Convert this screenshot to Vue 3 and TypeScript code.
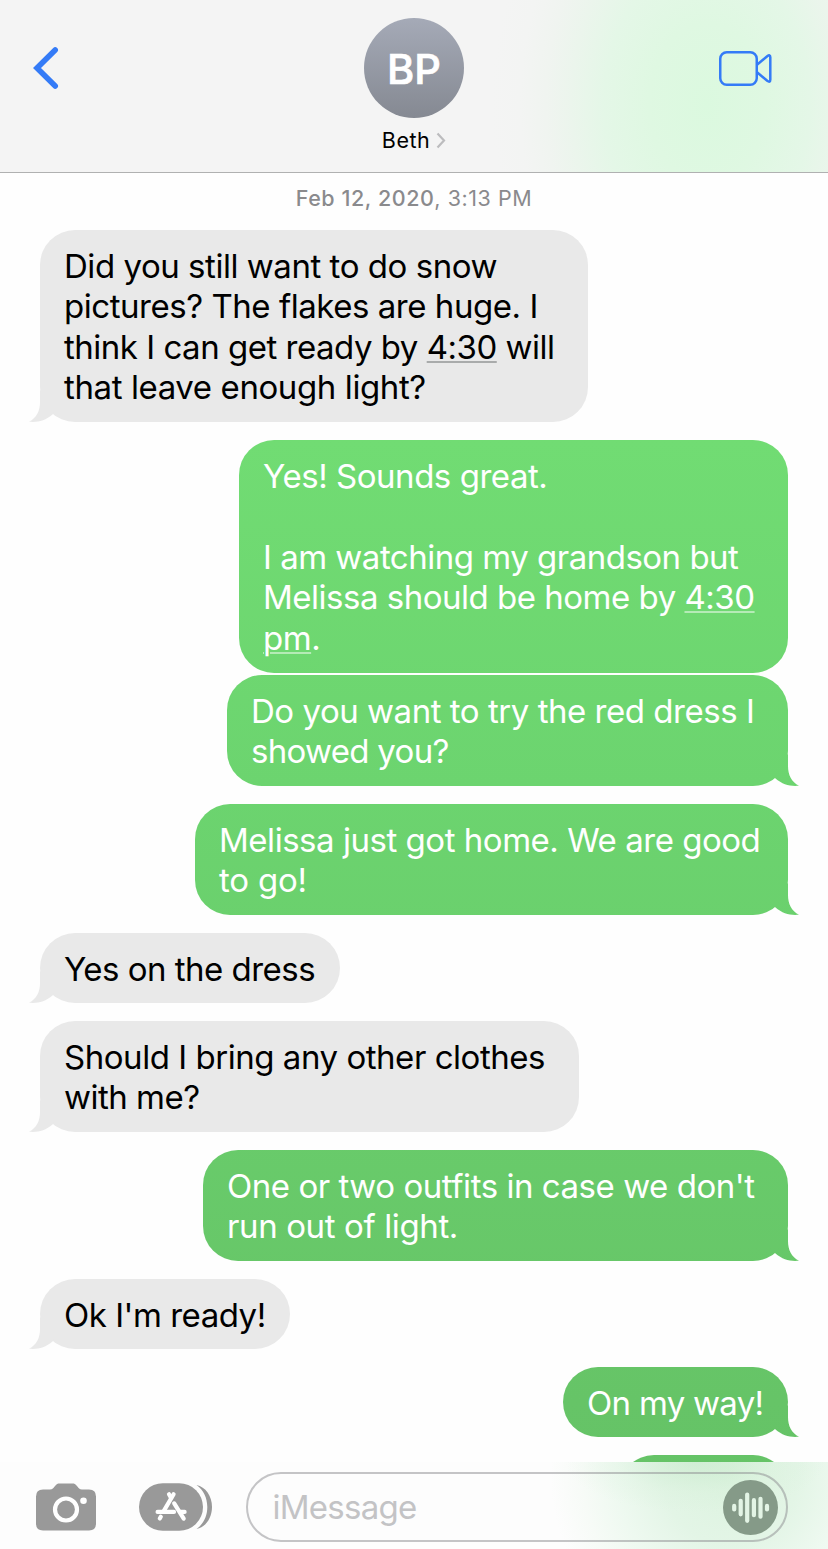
<script setup lang="ts">
interface Segment {
  text: string
  link?: boolean
}

interface Line {
  segments: Segment[]
  tracking: number
}

interface Message {
  side: 'in' | 'out'
  width: number
  tail: boolean
  lines: Line[]
}

const line = (text: string, tracking = -0.46): Line => ({ segments: [{ text }], tracking })

const messages: Message[] = [
  {
    side: 'in',
    width: 548,
    tail: true,
    lines: [
      line('Did you still want to do snow'),
      line('pictures? The flakes are huge. I'),
      { segments: [{ text: 'think I can get ready by ' }, { text: '4:30', link: true }, { text: ' will' }], tracking: -0.49 },
      line('that leave enough light?', -0.4),
    ],
  },
  {
    side: 'out',
    width: 549,
    tail: false,
    lines: [
      line('Yes! Sounds great.'),
      line(''),
      line('I am watching my grandson but', -0.5),
      { segments: [{ text: 'Melissa should be home by ' }, { text: '4:30', link: true }], tracking: -0.49 },
      { segments: [{ text: 'pm', link: true }, { text: '.' }], tracking: -0.5 },
    ],
  },
  {
    side: 'out',
    width: 561,
    tail: true,
    lines: [line('Do you want to try the red dress I', -0.47), line('showed you?', -0.7)],
  },
  {
    side: 'out',
    width: 593,
    tail: true,
    lines: [line('Melissa just got home. We are good', -0.47), line('to go!', -0.2)],
  },
  { side: 'in', width: 300, tail: true, lines: [line('Yes on the dress', -0.52)] },
  { side: 'in', width: 539, tail: true, lines: [line('Should I bring any other clothes', -0.46), line('with me?', -0.5)] },
  { side: 'out', width: 585, tail: true, lines: [line("One or two outfits in case we don't"), line('run out of light.', -0.38)] },
  { side: 'in', width: 250, tail: true, lines: [line("Ok I'm ready!", -0.48)] },
  { side: 'out', width: 225, tail: true, lines: [line('On my way!', -0.7)] },
  { side: 'out', width: 169, tail: false, lines: [line('')] },
]
</script>

<template>
  <div class="phone">
    <header class="header">
      <svg class="back" width="28" height="44" viewBox="0 0 28 44">
        <path d="M23.2 4 5 22.1 23.2 40" />
      </svg>
      <div class="contact">
        <div class="avatar"><span>BP</span></div>
        <div class="name">
          <span>Beth</span>
          <svg width="10" height="17" viewBox="0 0 10 17"><path d="M1.5 1.5 8 8.5 1.5 15.5" /></svg>
        </div>
      </div>
      <svg class="video" width="54" height="36" viewBox="0 0 54 36">
        <rect x="1.25" y="1.25" width="36.5" height="32.5" rx="6.5" />
        <path d="M38 13.8 48.2 5.2Q51.3 3 51.3 6.2V28.8Q51.3 32 48.2 29.8L38 21.2" />
      </svg>
    </header>

    <main class="thread">
      <p class="date"><b>Feb 12, 2020</b>, 3:13 PM</p>
      <div
        v-for="(message, i) in messages"
        :key="i"
        class="bubble"
        :class="[message.side, `rows-${message.lines.length}`, { tail: message.tail }]"
        :style="{ width: `${message.width}px` }"
      >
        <div v-for="(row, r) in message.lines" :key="r" class="line" :style="{ letterSpacing: `${row.tracking}px` }"><span v-for="(segment, s) in row.segments" :key="s" :class="{ link: segment.link }">{{ segment.text }}</span></div>
      </div>
    </main>

    <footer class="composer">
      <svg class="camera" width="60" height="48" viewBox="0 0 60 48">
        <path
          class="solid"
          d="M7 6.5H14C16.5 6.5 17.5 5 18.8 3.3 20.5 1 21.5.5 24 .5H36C38.5.5 39.5 1 41.2 3.3 42.5 5 43.5 6.5 46 6.5H53Q60 6.5 60 13.5V40.5Q60 47.5 53 47.5H7Q0 47.5 0 40.5V13.5Q0 6.5 7 6.5Z"
        />
        <circle class="ring" cx="30" cy="26.5" r="11" />
        <circle class="dot" cx="47.5" cy="17.8" r="3.3" />
      </svg>
      <svg class="apps" width="74" height="48" viewBox="0 0 74 48">
        <rect class="solid" x="0" y="0.2" width="64" height="47.6" rx="23.8" />
        <path class="solid" d="M57.5 1.9C66.5 3.8 73 12.8 73 24S66.5 44.2 57.5 46.1C64.5 40.8 68.3 33.5 68.3 24S64.5 7.2 57.5 1.9Z" />
        <g class="strokes">
          <path d="M30 11.3 32.1 14.9" />
          <path d="M34.6 11.3 25 27.6" />
          <path d="M35.2 20.4 44.7 35.6" />
          <path d="M18.6 28.9H35" />
          <path d="M41.5 28.9H45.6" />
          <path d="M21.8 33.8 20.8 35.5" />
        </g>
      </svg>
      <div class="field">
        <span class="placeholder">iMessage</span>
        <svg class="audio" width="55" height="55" viewBox="0 0 55 55">
          <circle cx="27.5" cy="27.5" r="27.5" />
          <path d="M11.2 25.9V29.5M17.7 20.8V34.3M24.2 14.5V40.8M30.9 20.2V35.2M37.5 18.8V36.7M44 25.9V29.5" />
        </svg>
      </div>
    </footer>
  </div>
</template>

<style>
html,
body {
  margin: 0;
  overflow: hidden;
}
</style>

<style scoped>
.phone {
  width: 828px;
  height: 1549px;
  display: flex;
  flex-direction: column;
  overflow: hidden;
  background: #fefefe;
  color: #000;
  font-family: Inter, 'Liberation Sans', sans-serif;
}

.header {
  flex: none;
  box-sizing: border-box;
  height: 173px;
  padding: 18px 32px 0;
  display: grid;
  grid-template-columns: 1fr 100px 1fr;
  border-bottom: 1px solid #b0b1b1;
  background: radial-gradient(ellipse 215px 300px at 707px 104px, #dbf9df 0%, #dff8e2 27%, #e4f7e7 48%, #ebf5ec 63%, #f0f4f0 75%, #f3f4f3 87%, #f4f4f4 100%) #f4f4f4;
}

.back {
  margin-top: 28px;
}

.back path {
  fill: none;
  stroke: #347bf7;
  stroke-width: 5.6;
  stroke-linecap: round;
  stroke-linejoin: miter;
}

.contact {
  display: flex;
  flex-direction: column;
  align-items: center;
}

.avatar {
  width: 100px;
  height: 100px;
  border-radius: 50%;
  display: flex;
  align-items: center;
  justify-content: center;
  background: linear-gradient(#a5aab7, #858992);
  color: #fff;
  font-size: 41.5px;
  font-weight: 500;
  line-height: 50px;
}

.avatar span {
  padding-top: 2px;
  -webkit-text-stroke: 0.7px #fff;
  stroke-linejoin: round;
}

.name {
  display: flex;
  align-items: center;
  gap: 6px;
  margin-top: 9px;
  font-size: 21.5px;
  line-height: 27px;
  letter-spacing: 0.5px;
}

.name path {
  fill: none;
  stroke: #bcbcbe;
  stroke-width: 2.2;
}

.video {
  justify-self: end;
  margin: 33px 23px 0 0;
}

.video rect,
.video path {
  fill: none;
  stroke: #347bf7;
  stroke-width: 2.5;
  stroke-linejoin: round;
}

.thread {
  flex: 1;
  min-height: 0;
  overflow: hidden;
  padding: 0 40px;
  display: flex;
  flex-direction: column;
}

.date {
  flex: none;
  margin: 0;
  height: 57px;
  line-height: 50px;
  text-align: center;
  font-size: 21.5px;
  letter-spacing: 0.55px;
  color: #8a8a8d;
}

.date b {
  font-weight: 550;
}

.bubble {
  --fill: #e9e9e9;
  position: relative;
  flex: none;
  box-sizing: border-box;
  margin-bottom: 18px;
  padding: 16px 24px 0;
  border-radius: 35px;
  background: var(--fill);
  background-attachment: fixed;
  font-size: 33px;
  line-height: 40.4px;
}

.bubble.in {
  align-self: flex-start;
}

.bubble.out {
  --fill: linear-gradient(#76e278 0, #71dc73 440px, #6cd46f 785px, #66c467 1400px, #64c266 1549px);
  align-self: flex-end;
  color: #fff;
}

.bubble.out:not(.tail) {
  margin-bottom: 2px;
}

.rows-1 {
  height: 70px;
}

.rows-2 {
  height: 111px;
}

.rows-4 {
  height: 192px;
}

.rows-5 {
  height: 233px;
}

.tail::after {
  content: '';
  position: absolute;
  bottom: 0;
  width: 36px;
  height: 36px;
  background: var(--fill);
  background-attachment: fixed;
}

.in.tail::after {
  left: -12px;
  clip-path: path('M12 4V16C12 25 8.500 32 1 35.800C10 36.500 17 35 24.800 28.300L30 20Z');
}

.out.tail::after {
  right: -12px;
  clip-path: path('M24 4V16C24 25 27.500 32 35 35.800C26 36.500 19 35 11.200 28.300L6 20Z');
}

.line {
  height: 40.4px;
  white-space: pre;
}

.link {
  text-decoration: underline;
  text-decoration-color: #a9abab;
  text-decoration-thickness: 2px;
  text-underline-offset: 2px;
}

.out .link {
  text-decoration-color: #b5ebb6;
}

.composer {
  flex: none;
  box-sizing: border-box;
  height: 87px;
  padding: 10px 40px 0 36px;
  display: flex;
  align-items: flex-start;
  background:
    radial-gradient(ellipse 130px 50px at 695px 0, rgba(190, 230, 195, 0.45), rgba(210, 238, 213, 0.2) 60%, rgba(220, 243, 223, 0) 100%),
    radial-gradient(ellipse 180px 190px at 730px 10px, #dcf3df 0%, #e3f5e6 38%, #eef9f0 63%, #f7fbf7 82%, #fdfdfd 100%) #fdfdfd;
}

.camera {
  margin-top: 11px;
}

.apps {
  margin: 11px 0 0 43px;
}

.solid {
  fill: #999;
}

.ring {
  fill: none;
  stroke: #fff;
  stroke-width: 4.2;
}

.dot {
  fill: #fff;
}

.strokes {
  fill: none;
  stroke: #fff;
  stroke-width: 4.2;
  stroke-linecap: round;
}

.field {
  box-sizing: border-box;
  width: 542px;
  height: 70px;
  margin-left: auto;
  padding: 0 8px 0 24.5px;
  display: flex;
  align-items: center;
  justify-content: space-between;
  border: 2px solid rgba(140, 140, 144, 0.5);
  border-radius: 35px;
}

.placeholder {
  font-size: 33px;
  letter-spacing: -0.75px;
  color: #c3c3c5;
}

.audio circle {
  fill: #859a88;
}

.audio path {
  stroke: #e3f4e5;
  stroke-width: 4.2;
  stroke-linecap: round;
}
</style>
